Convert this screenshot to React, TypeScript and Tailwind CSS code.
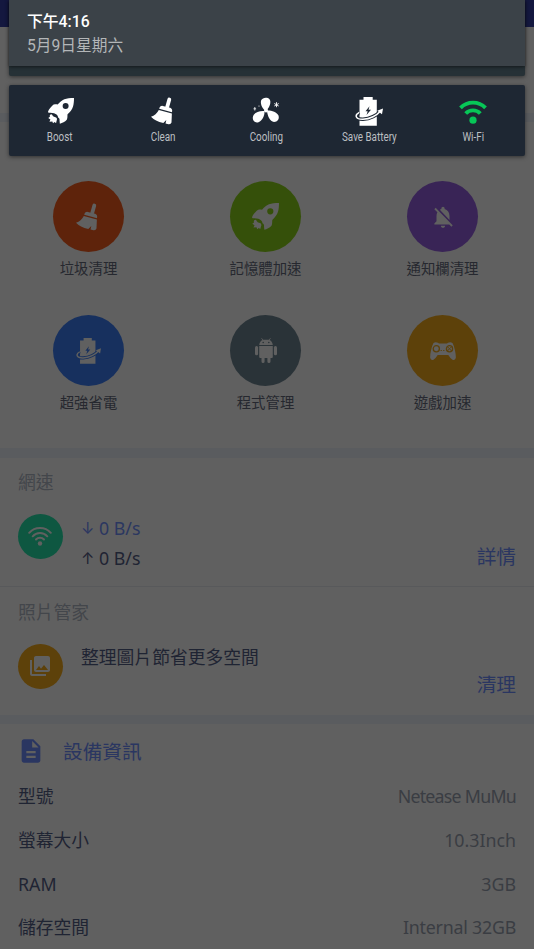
import React from 'react';
import { MdDescription, MdNotificationsOff, MdPhotoLibrary } from 'react-icons/md';

type IconProps = { className?: string };

function RocketIcon({ className }: IconProps) {
  return (
    <svg viewBox="0 0 27 27" className={className} fill="currentColor">
      <path
        fillRule="evenodd"
        d="M27 0C23 0 19.500 .3 17 1.300C14.300 2.500 12 4.500 10 6.800C8 6.400 6 6.500 4.700 7.800C3 9.600 1 11.300 0 14.300L.5 15.300C4 14.900 7.500 15.600 9.200 17.500C10 18.400 10.400 19.300 10.500 20.300C11.800 20.800 12.200 22 12 23.500L12.300 26.700C15 26 17.500 25 19.500 22.700C20.500 20.800 20 18.800 20.300 17C23 14.500 25 12 26 8.800C26.800 6 27 3 27 0ZM18.300 5.200a3.100 3.100 0 1 0 0 6.200a3.100 3.100 0 1 0 0-6.200Z"
      />
      <path d="M3.500 16.800C4.800 17.200 4.800 19.500 7 19.800C9.300 20 9.800 21.800 9 23.500C8.500 24.600 8.800 25.400 8.200 26L6.800 25L5.200 26.300L4.500 24.300L1.500 24.600L2.500 22.300L.300 20.800L2 19.500C1.500 18 2.200 17 3.500 16.800Z" />
    </svg>
  );
}

function BroomIcon({ className }: IconProps) {
  return (
    <svg viewBox="0 0 22 28" className={className} fill="currentColor">
      <path d="M18.300 2.500L16.200 10" stroke="currentColor" strokeWidth="3.800" strokeLinecap="round" />
      <path d="M8.200 11.800Q8.800 8.600 11.800 8.900L19.200 10.700Q21.800 11.700 21 15.200Z" />
      <path d="M7.800 13L20.900 16.500L20.500 25.500Q19.800 27.600 17.500 27.200L14.500 26.600L15.300 23L12.300 26.100Q4 24.200 0 19.800Q5.200 18 7.800 13Z" />
    </svg>
  );
}

function FanIcon({ className }: IconProps) {
  return (
    <svg viewBox="0 0 28 28" className={className} fill="currentColor">
      <path d="M12.500 13C9.500 10.500 8.200 6 9.200 3.300C10.500 .4 15.500 0 17.500 2.300C19.500 5 17.800 9.500 15 13Z" />
      <path d="M12.500 14C12.800 18.500 10.500 23.500 6.500 25.200C3 26.300 .500 23.800 .800 20.500C1.300 16.300 6 13.500 12.500 14Z" />
      <path d="M15 13.500C19 13.200 25 15 26.500 18.500C27.600 21.800 25.500 25 22 25C17.800 24.700 15.300 18.500 15 13.500Z" />
      <circle cx="14" cy="13.500" r="2" />
      <path d="M2.800 10V13.500M1.500 11.800H4.100" stroke="currentColor" strokeWidth=".8" />
      <circle cx="7" cy="9" r=".6" />
      <path
        d="M24.500 5.200V10.200M22.300 6.500L26.700 9M26.700 6.500L22.300 9"
        stroke="currentColor"
        strokeWidth=".9"
      />
    </svg>
  );
}

function BatteryIcon({ className, cut }: IconProps & { cut: string }) {
  return (
    <svg viewBox="0 0 28 29" className={className} fill="currentColor">
      <path d="M8.500 0H17.700V2.700H21.800V28.800H4.500V2.700H8.500Z" />
      <path d="M14.500 9.300L10.500 14.300H12.700L11.500 18L16 12.800H13.500Z" fill={cut} />
      <path d="M4.300 15.300C-1 18.200 .700 22.500 8 22.300C15 22 22 18.300 25 14.500" fill="none" stroke={cut} strokeWidth="3.600" />
      <path d="M4.300 15.300C-1 18.200 .700 22.500 8 22.300C15 22 22 18.300 25 14.500" fill="none" stroke="currentColor" strokeWidth="1.500" />
      <path d="M28 11.500L27 17.300L22.200 13.700Z" />
    </svg>
  );
}

function WifiIcon({ className }: IconProps) {
  return (
    <svg viewBox="0 0 28 25" className={className} fill="none" stroke="currentColor" strokeWidth="3.900">
      <path d="M1.500 8.800A17.800 17.800 0 0 1 26.500 8.800" />
      <path d="M6.700 14.500A10.200 10.200 0 0 1 21.300 14.500" />
      <circle cx="14" cy="21.200" r="3.600" fill="currentColor" stroke="none" />
    </svg>
  );
}

function SignalIcon({ className }: IconProps) {
  return (
    <svg viewBox="0 0 24 20" className={className} fill="none" stroke="currentColor" strokeWidth="2" strokeLinecap="round">
      <path d="M1.200 6.800A14.500 14.500 0 0 1 22.800 6.800" />
      <path d="M4.700 10.300A9.800 9.800 0 0 1 19.300 10.300" />
      <path d="M8 13.500A5.300 5.300 0 0 1 16 13.500" />
      <circle cx="12" cy="17.500" r="2.200" fill="currentColor" stroke="none" />
    </svg>
  );
}

function AndroidIcon({ className }: IconProps) {
  return (
    <svg viewBox="0 0 22 25" className={className} fill="currentColor">
      <path
        fillRule="evenodd"
        d="M4.200 7C4.400 4.500 5.800 2.700 8 1.800H14C16.200 2.700 17.600 4.500 17.800 7ZM8.200 3.700a.8 .8 0 1 0 0 1.600a.8 .8 0 1 0 0-1.600ZM13.800 3.700a.8 .8 0 1 0 0 1.600a.8 .8 0 1 0 0-1.600Z"
      />
      <path d="M6.500 .2L8 2.200M15.500 .2L14 2.200" stroke="currentColor" strokeWidth=".8" />
      <path d="M4.200 8H17.800V19Q17.800 20 16.800 20H15.500V23.500Q15.500 25 14 25Q12.400 25 12.400 23.500V20H9.600V23.500Q9.600 25 8 25Q6.500 25 6.500 23.500V20H5.200Q4.200 20 4.200 19Z" />
      <rect x="0" y="8" width="3.100" height="9.300" rx="1.500" />
      <rect x="18.900" y="8" width="3.100" height="9.300" rx="1.500" />
    </svg>
  );
}

function GamepadIcon({ className }: IconProps) {
  return (
    <svg viewBox="0 0 26 18" className={className}>
      <path
        fill="currentColor"
        d="M3.500 1Q5.500-.3 8 .8L9 1.500H17L18 .8Q20.500-.3 22.500 1Q24 3.500 25 8.500Q26 13 25.800 16Q25 18.500 22.500 17.700Q20 16 18.300 13H7.700Q6 16 3.500 17.700Q1 18.500 .200 16Q0 13 1 8.500Q2 3.500 3.500 1Z"
      />
      <g fill="none" stroke="#5d410a">
        <circle cx="6.300" cy="6.800" r="3.100" strokeWidth="1.300" />
        <circle cx="19.500" cy="6.800" r="3.100" strokeWidth="1.300" />
        <path d="M17.300 4.600L21.700 9M21.700 4.600L17.300 9" strokeWidth="1" />
        <path d="M10.500 8.500H12M13 8.500H14.500" strokeWidth=".8" />
      </g>
    </svg>
  );
}

const toggles = [
  { label: 'Boost', icon: <RocketIcon className="w-[26px] h-[26px]" /> },
  { label: 'Clean', icon: <BroomIcon className="w-[22px] h-[28px] mr-[3px]" /> },
  { label: 'Cooling', icon: <FanIcon className="w-[28px] h-[28px] mr-px" /> },
  { label: 'Save Battery', icon: <BatteryIcon className="w-[28px] h-[29px] mr-[2px]" cut="#1e2733" /> },
  { label: 'Wi-Fi', icon: <WifiIcon className="w-[28px] h-[25px] text-[#07c657]" /> }
];

const tools = [
  { label: '垃圾清理', bg: 'bg-[#5e230b]', icon: <BroomIcon className="w-[22px] h-[28px] mr-[4px]" /> },
  { label: '記憶體加速', bg: 'bg-[#35500a]', icon: <RocketIcon className="w-[27px] h-[27px]" /> },
  { label: '通知欄清理', bg: 'bg-[#392456]', icon: <MdNotificationsOff className="w-[26px] h-[26px]" /> },
  { label: '超強省電', bg: 'bg-[#17305e]', icon: <BatteryIcon className="w-[25px] h-[26px] mr-px" cut="#17305e" /> },
  { label: '程式管理', bg: 'bg-[#2a3338]', icon: <AndroidIcon className="w-[22px] h-[25px]" /> },
  { label: '遊戲加速', bg: 'bg-[#5d410a]', icon: <GamepadIcon className="w-[26px] h-[18px]" /> }
];

const deviceInfo = [
  { label: '型號', value: 'Netease MuMu', tracking: 'tracking-[-0.75px]' },
  { label: '螢幕大小', value: '10.3Inch', tracking: 'tracking-normal' },
  { label: 'RAM', value: '3GB', tracking: 'tracking-normal' },
  { label: '儲存空間', value: 'Internal 32GB', tracking: 'tracking-[-0.22px]' }
];

function NotificationShade() {
  return (
    <div className="absolute inset-x-[9px] top-0 font-[Roboto,'Noto_Sans_CJK_TC',sans-serif]">
      <div className="h-[76px] rounded-b-[2px] bg-[#263136] shadow-[0_1px_4px_rgba(0,0,0,0.5)]">
        <div className="h-[66px] bg-[#3b4248] pl-[18px] pt-[10px] shadow-[0_1px_3px_rgba(0,0,0,0.5)]">
          <div className="text-[15.800px] leading-[24px] font-medium text-white">下午4:16</div>
          <div className="text-[15.700px] leading-[23px] text-[#b3b6b8]">5月9日星期六</div>
        </div>
      </div>
      <div className="mt-[9px] h-[71px] rounded-[2px] bg-[#1e2733] shadow-[0_1px_4px_rgba(0,0,0,0.5)] grid grid-cols-5">
        {toggles.map(toggle => (
          <div key={toggle.label} className="flex flex-col items-center pt-[11px] text-white">
            <div className="h-[30px] flex items-center justify-center">{toggle.icon}</div>
            <div className="mt-[3px] -ml-px text-[12px] leading-[17px] whitespace-nowrap scale-x-[0.82] text-[#bcbfc2]">
              {toggle.label}
            </div>
          </div>
        ))}
      </div>
    </div>
  );
}

export default function App() {
  return (
    <div className="relative w-[534px] h-[949px] overflow-hidden bg-[#606060] text-[#1f2433] text-[17.8px] font-['Noto_Sans','Noto_Sans_CJK_TC',sans-serif]">
      <div className="h-[27px] bg-[#14183f]" />
      <div className="h-[86px]" />
      <div className="h-[9px] bg-[#5a5c5f]" />

      {/* Tools */}
      <div className="h-[326px] w-[531px] pt-[59px] grid grid-cols-3 auto-rows-[134px]">
        {tools.map(tool => (
          <div key={tool.label} className="flex flex-col items-center">
            <div className={`w-[71px] h-[71px] rounded-full flex items-center justify-center text-[#606060] ${tool.bg}`}>
              {tool.icon}
            </div>
            <div className="mt-[6px] text-[14.4px] leading-[20px] text-[#26282f] font-['Noto_Sans_CJK_TC',sans-serif]">
              {tool.label}
            </div>
          </div>
        ))}
      </div>
      <div className="h-[10px] bg-[#5a5c5f]" />

      {/* Network speed */}
      <div className="h-[128px] px-[18px] pt-[12px]">
        <div className="leading-[24px] text-[#43464b]">網速</div>
        <div className="mt-[20px] flex">
          <div className="w-[45px] h-[45px] rounded-full bg-[#0e5741] text-[#606060] flex items-center justify-center">
            <SignalIcon className="w-[24px] h-[20px] mr-px mb-px" />
          </div>
          <div className="ml-[18px] -mt-px leading-[30px]">
            <div className="flex text-[#2b3760]">
              <span className="w-[18px] font-[Inter] text-[16px]">↓</span>0 B/s
            </div>
            <div className="flex">
              <span className="w-[18px] font-[Inter] text-[16px]">↑</span>0 B/s
            </div>
          </div>
          <div className="ml-auto mt-[29px] text-[19.7px] leading-[28px] text-[#2a3661]">詳情</div>
        </div>
      </div>
      <div className="h-px bg-[#58595b]" />

      {/* Photo manager */}
      <div className="h-[128px] px-[18px] pt-[13px]">
        <div className="leading-[24px] text-[#43464b]">照片管家</div>
        <div className="mt-[20px] flex">
          <div className="w-[45px] h-[45px] rounded-full bg-[#5d410a] text-[#606060] flex items-center justify-center">
            <MdPhotoLibrary className="w-[24px] h-[24px] mr-px mb-px" />
          </div>
          <div className="ml-[18px] mt-px leading-[24px]">整理圖片節省更多空間</div>
          <div className="ml-auto mt-[27px] text-[19.7px] leading-[28px] text-[#2a3661]">清理</div>
        </div>
      </div>
      <div className="h-[9px] bg-[#5a5c5f]" />

      {/* Device info */}
      <div className="px-[18px] pt-[13px]">
        <div className="flex items-center h-[28px] text-[#2a3661]">
          <MdDescription className="w-[28px] h-[28px] -ml-px mb-px" />
          <span className="ml-[18px] mt-[2px] text-[19.7px]">設備資訊</span>
        </div>
        <div className="mt-[10px]">
          {deviceInfo.map(item => (
            <div key={item.label} className="flex items-center justify-between h-[43.6px]">
              <span>{item.label}</span>
              <span className={`text-[#3a3d43] ${item.tracking}`}>{item.value}</span>
            </div>
          ))}
        </div>
      </div>

      <NotificationShade />
    </div>
  );
}
